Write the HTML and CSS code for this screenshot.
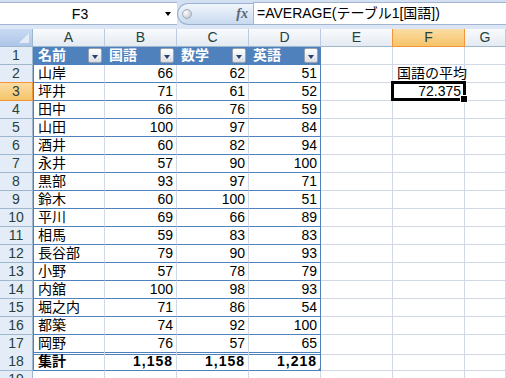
FILE: index.html
```html
<!DOCTYPE html>
<html lang="ja">
<head>
    <meta charset="UTF-8">
    <meta name="viewport" content="width=device-width, initial-scale=1.0">
    <title>Book1 - 国語の平均</title>
    <link rel="stylesheet" href="styles.css">
</head>
<body>
    <div class="formula-bar">
        <div class="name-box">
            <span class="name">F3</span>
            <span class="name-arrow"></span>
        </div>
        <div class="fx-group">
            <span class="knob"></span>
            <span class="fx">fx</span>
        </div>
        <div class="formula">=AVERAGE(テーブル1[国語])</div>
    </div>

    <div class="sheet">
        <div class="row colhead">
            <div class="corner"></div>
            <div class="ch">A</div>
            <div class="ch">B</div>
            <div class="ch">C</div>
            <div class="ch">D</div>
            <div class="ch">E</div>
            <div class="ch active">F</div>
            <div class="ch">G</div>
        </div>

        <div class="row">
            <div class="rh">1</div>
            <div class="c th first">名前<span class="filter"></span></div>
            <div class="c th">国語<span class="filter"></span></div>
            <div class="c th">数学<span class="filter"></span></div>
            <div class="c th last">英語<span class="filter"></span></div>
            <div class="c"></div><div class="c"></div><div class="c"></div>
        </div>
        <div class="row">
            <div class="rh">2</div>
            <div class="c t first">山岸</div>
            <div class="c t n">66</div><div class="c t n">62</div><div class="c t n last">51</div>
            <div class="c"></div><div class="c">国語の平均</div><div class="c"></div>
        </div>
        <div class="row">
            <div class="rh active">3</div>
            <div class="c t first">坪井</div>
            <div class="c t n">71</div><div class="c t n">61</div><div class="c t n last">52</div>
            <div class="c"></div>
            <div class="c n current">72.375<span class="selection"></span></div>
            <div class="c"></div>
        </div>
        <div class="row">
            <div class="rh">4</div>
            <div class="c t first">田中</div>
            <div class="c t n">66</div><div class="c t n">76</div><div class="c t n last">59</div>
            <div class="c"></div><div class="c"></div><div class="c"></div>
        </div>
        <div class="row">
            <div class="rh">5</div>
            <div class="c t first">山田</div>
            <div class="c t n">100</div><div class="c t n">97</div><div class="c t n last">84</div>
            <div class="c"></div><div class="c"></div><div class="c"></div>
        </div>
        <div class="row">
            <div class="rh">6</div>
            <div class="c t first">酒井</div>
            <div class="c t n">60</div><div class="c t n">82</div><div class="c t n last">94</div>
            <div class="c"></div><div class="c"></div><div class="c"></div>
        </div>
        <div class="row">
            <div class="rh">7</div>
            <div class="c t first">永井</div>
            <div class="c t n">57</div><div class="c t n">90</div><div class="c t n last">100</div>
            <div class="c"></div><div class="c"></div><div class="c"></div>
        </div>
        <div class="row">
            <div class="rh">8</div>
            <div class="c t first">黒部</div>
            <div class="c t n">93</div><div class="c t n">97</div><div class="c t n last">71</div>
            <div class="c"></div><div class="c"></div><div class="c"></div>
        </div>
        <div class="row">
            <div class="rh">9</div>
            <div class="c t first">鈴木</div>
            <div class="c t n">60</div><div class="c t n">100</div><div class="c t n last">51</div>
            <div class="c"></div><div class="c"></div><div class="c"></div>
        </div>
        <div class="row">
            <div class="rh">10</div>
            <div class="c t first">平川</div>
            <div class="c t n">69</div><div class="c t n">66</div><div class="c t n last">89</div>
            <div class="c"></div><div class="c"></div><div class="c"></div>
        </div>
        <div class="row">
            <div class="rh">11</div>
            <div class="c t first">相馬</div>
            <div class="c t n">59</div><div class="c t n">83</div><div class="c t n last">83</div>
            <div class="c"></div><div class="c"></div><div class="c"></div>
        </div>
        <div class="row">
            <div class="rh">12</div>
            <div class="c t first">長谷部</div>
            <div class="c t n">79</div><div class="c t n">90</div><div class="c t n last">93</div>
            <div class="c"></div><div class="c"></div><div class="c"></div>
        </div>
        <div class="row">
            <div class="rh">13</div>
            <div class="c t first">小野</div>
            <div class="c t n">57</div><div class="c t n">78</div><div class="c t n last">79</div>
            <div class="c"></div><div class="c"></div><div class="c"></div>
        </div>
        <div class="row">
            <div class="rh">14</div>
            <div class="c t first">内舘</div>
            <div class="c t n">100</div><div class="c t n">98</div><div class="c t n last">93</div>
            <div class="c"></div><div class="c"></div><div class="c"></div>
        </div>
        <div class="row">
            <div class="rh">15</div>
            <div class="c t first">堀之内</div>
            <div class="c t n">71</div><div class="c t n">86</div><div class="c t n last">54</div>
            <div class="c"></div><div class="c"></div><div class="c"></div>
        </div>
        <div class="row">
            <div class="rh">16</div>
            <div class="c t first">都築</div>
            <div class="c t n">74</div><div class="c t n">92</div><div class="c t n last">100</div>
            <div class="c"></div><div class="c"></div><div class="c"></div>
        </div>
        <div class="row before-total">
            <div class="rh">17</div>
            <div class="c t first">岡野</div>
            <div class="c t n">76</div><div class="c t n">57</div><div class="c t n last">65</div>
            <div class="c"></div><div class="c"></div><div class="c"></div>
        </div>
        <div class="row total">
            <div class="rh">18</div>
            <div class="c t first">集計</div>
            <div class="c t n">1,158</div><div class="c t n">1,158</div><div class="c t n last corner-grip">1,218</div>
            <div class="c"></div><div class="c"></div><div class="c"></div>
        </div>
        <div class="row">
            <div class="rh">19</div>
            <div class="c"></div><div class="c"></div><div class="c"></div><div class="c"></div>
            <div class="c"></div><div class="c"></div><div class="c"></div>
        </div>
    </div>
</body>
</html>
```

FILE: styles.css
```css
* {
    box-sizing: border-box;
}
body {
    margin: 0;
    width: 506px;
    height: 378px;
    overflow: hidden;
    background: #fff;
    color: #000;
    font-family: "Liberation Sans", "Noto Sans CJK JP", sans-serif;
    font-size: 14px;
}

/* formula bar */
.formula-bar {
    height: 29px;
    padding-top: 2px;
    display: flex;
    align-items: flex-start;
    background: linear-gradient(#d3e0f1, #dce6f4);
}
.name-box {
    width: 177px;
    height: 23px;
    display: flex;
    align-items: center;
    background: #fff;
    border-top: 1px solid #a1b5d2;
    border-bottom: 1px solid #a1b5d2;
}
.name {
    width: 160px;
    text-align: center;
}
.name-arrow {
    width: 0;
    height: 0;
    margin-left: 5px;
    border-left: 3.5px solid transparent;
    border-right: 3.5px solid transparent;
    border-top: 4px solid #000;
}
.fx-group {
    width: 76px;
    height: 22px;
    margin-top: 1px;
    display: flex;
    align-items: center;
    padding-left: 4px;
    border: 1px solid #9ab1d1;
    border-right: none;
    border-radius: 11px 0 0 11px;
    background: linear-gradient(#f1f6fc, #c8d9ef);
}
.knob {
    width: 10px;
    height: 10px;
    border-radius: 50%;
    border: 1px solid #a4adba;
    background: radial-gradient(circle at 35% 35%, #ffffff, #c9ced6 70%, #9ea6b2);
}
.fx {
    margin-left: auto;
    margin-right: 5px;
    font-family: "Liberation Serif", serif;
    font-style: italic;
    font-weight: bold;
    font-size: 14px;
    color: #5a6575;
}
.formula {
    flex: 1;
    height: 23px;
    padding-left: 3px;
    line-height: 21px;
    white-space: nowrap;
    background: #fff;
    border: 1px solid #a1b5d2;
    border-right: none;
}

/* grid */
.row {
    display: grid;
    grid-template-columns: 33px repeat(6, 72px) 1fr;
    height: 18px;
}
.colhead .ch,
.corner {
    line-height: 17px;
    text-align: center;
    color: #27413e;
    background: linear-gradient(#f9fbfd, #e4eaf2);
    border-right: 1px solid #bccbe0;
    border-bottom: 1px solid #9eb6ce;
}
.corner {
    position: relative;
    background: linear-gradient(#c9daf1, #adc6e8);
    border-right: 1px solid #9eb6ce;
}
.corner::after {
    content: "";
    position: absolute;
    right: 3px;
    bottom: 3px;
    width: 0;
    height: 0;
    border-left: 10px solid transparent;
    border-bottom: 10px solid #e3ecf7;
}
.ch.active {
    background: linear-gradient(#fbdca4, #f6c46a);
    border-right: 1px solid #f29536;
    border-left: 1px solid #f29536;
    border-bottom: 1px solid #f29536;
    margin-left: -1px;
}
.rh {
    line-height: 17px;
    text-align: center;
    color: #27413e;
    background: #e4ecf7;
    border-right: 1px solid #9eb6ce;
    border-bottom: 1px solid #9eb6ce;
}
.rh.active {
    background: linear-gradient(#fbdca4, #f6c46a);
    border-right-color: #f29536;
    border-bottom-color: #f29536;
    border-top: 1px solid #f29536;
    margin-top: -1px;
    height: 19px;
    line-height: 17px;
}

.c {
    padding: 0 3px 0 4px;
    line-height: 17px;
    white-space: nowrap;
    border-right: 1px solid #d0d7e5;
    border-bottom: 1px solid #d0d7e5;
}
.n {
    text-align: right;
}

/* table style */
.t {
    border-bottom-color: #4f81bd;
}
.first {
    border-left: 1px solid #4f81bd;
}
.last {
    border-right-color: #4f81bd;
}
.th {
    display: flex;
    align-items: center;
    justify-content: space-between;
    padding-right: 2px;
    color: #fff;
    font-weight: bold;
    background: #4f81bd;
    border-right-color: #4f81bd;
    border-bottom-color: #4f81bd;
}
.filter {
    width: 14px;
    height: 15px;
    display: flex;
    align-items: center;
    justify-content: center;
    padding-top: 2px;
    border: 1px solid #9aa2ad;
    border-radius: 2px;
    background: linear-gradient(#ffffff, #d9dde3);
}
.filter::after {
    content: "";
    width: 0;
    height: 0;
    border-left: 3.5px solid transparent;
    border-right: 3.5px solid transparent;
    border-top: 4px solid #23406e;
}
.before-total .t {
    border-bottom: 3px double #4f81bd;
}
.total .t {
    font-weight: bold;
}
.total .n {
    letter-spacing: 1px;
}
.corner-grip {
    position: relative;
}
.corner-grip::after {
    content: "";
    position: absolute;
    right: -1px;
    bottom: -1px;
    width: 0;
    height: 0;
    border-left: 4px solid transparent;
    border-bottom: 4px solid #4f81bd;
}

/* active cell */
.current {
    position: relative;
}
.selection {
    position: absolute;
    left: -2px;
    top: -2px;
    right: -2px;
    bottom: -1px;
    border: 3px solid #000;
}
.selection::after {
    content: "";
    position: absolute;
    right: -5px;
    bottom: -5px;
    width: 6px;
    height: 6px;
    background: #000;
    border: 1px solid #fff;
}
```
